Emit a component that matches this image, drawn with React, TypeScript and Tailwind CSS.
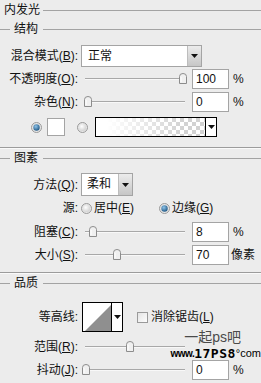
import React from "react"

const line = "bg-[#a3a3a3]"

function Radio({ on }: { on?: boolean }) {
  return (
    <svg width="11" height="11" viewBox="0 0 11 11" className="shrink-0">
      <defs>
        <radialGradient id={on ? "rOn" : "rOff"} cx="40%" cy="35%" r="70%">
          <stop offset="0%" stopColor={on ? "#8fc4ea" : "#ffffff"} />
          <stop offset="100%" stopColor={on ? "#1b5380" : "#cfcfcf"} />
        </radialGradient>
      </defs>
      <circle cx="5.5" cy="5.5" r="5" fill="#e6e6e6" stroke="#9a9a9a" />
      {on ? (
        <circle cx="5.5" cy="5.5" r="3.2" fill="url(#rOn)" />
      ) : (
        <circle cx="5.5" cy="5.5" r="3.6" fill="url(#rOff)" />
      )}
    </svg>
  )
}

function Arrow() {
  return (
    <svg width="7" height="4" viewBox="0 0 7 4">
      <path d="M0 0h7L3.5 4z" fill="#111" />
    </svg>
  )
}

function Label({ children }: { children: React.ReactNode }) {
  return <div className="w-[78px] shrink-0 text-right whitespace-nowrap">{children}</div>
}

function Slider({ at }: { at: number }) {
  // at = thumb centre, px from the slider's left edge
  return (
    <div className="relative ml-[3px] w-[108px] h-full shrink-0">
      <div className="absolute left-[4px] right-[4px] top-[9px] h-px bg-[#a8a8a8]" />
      <div className="absolute left-[4px] right-[4px] top-[10px] h-px bg-[#f8f8f8]" />
      <svg width="8" height="11" viewBox="0 0 8 11" className="absolute top-[4px]" style={{ left: at - 4 }}>
        <path d="M0.5 10.5V3.5Q0.5 0.5 4 0.5Q7.5 0.5 7.5 3.5V10.5Z" fill="#f0f0f0" stroke="#8c8c8c" />
        <path d="M2 9V4" stroke="#ffffff" />
      </svg>
    </div>
  )
}

function Field({ value }: { value: string }) {
  return (
    <div className="ml-[3px] w-[37px] h-[20px] shrink-0 bg-white border border-[#a4a4a4] pl-[3px] leading-[18px]">
      {value}
    </div>
  )
}

function Section({ title }: { title: string }) {
  return (
    <div className="flex items-center h-[18px]">
      <div className={`w-[10px] h-px ${line}`} />
      <span className="ml-[4px]">{title}</span>
      <div className={`flex-1 h-px ml-[5px] ${line}`} />
    </div>
  )
}

function Separator({ mt }: { mt: string }) {
  return (
    <div className={mt}>
      <div className="h-px bg-[#9c9c9c]" />
      <div className="h-px bg-[#fafafa]" />
    </div>
  )
}

function DropButton() {
  return (
    <div className="w-[14px] h-full flex items-center justify-center bg-gradient-to-b from-[#ececec] to-[#c6c6c6] border-l border-[#bdbdbd]">
      <Arrow />
    </div>
  )
}

export default function App() {
  return (
    <div className="relative w-[261px] h-[383px] overflow-hidden bg-[#ececec] text-[12px] text-[#111] font-['Liberation_Sans','Noto_Sans_CJK_SC',sans-serif]">
      <div className="flex items-center h-[20px]">
        <span className="ml-[4px]">内发光</span>
        <div className={`flex-1 h-px ml-[3px] ${line}`} />
      </div>
      <Section title="结构" />

      <div className="flex items-center h-[22px] mt-[7px]">
        <Label>混合模式(<u>B</u>):</Label>
        <div className="ml-[3px] w-[121px] h-[22px] flex bg-white border border-[#a4a4a4]">
          <div className="flex-1 pl-[6px] leading-[20px]">正常</div>
          <DropButton />
        </div>
      </div>

      <div className="flex items-center h-[20px] mt-[2px]">
        <Label>不透明度(<u>O</u>):</Label>
        <Slider at={102} />
        <Field value="100" />
        <span className="ml-[4px]">%</span>
      </div>

      <div className="flex items-center h-[20px] mt-[3px]">
        <Label>杂色(<u>N</u>):</Label>
        <Slider at={7} />
        <Field value="0" />
        <span className="ml-[4px]">%</span>
      </div>

      <div className="flex items-center h-[20px] mt-[5px] pl-[31px]">
        <Radio on />
        <div className="ml-[5px] w-[18px] h-[18px] bg-white border border-[#a4a4a4]" />
        <div className="ml-[12px]">
          <Radio />
        </div>
        <div className="ml-[7px] w-[122px] h-[20px] flex border border-black bg-white">
          <div className="relative flex-1 bg-[repeating-conic-gradient(#d2d2d2_0_25%,#ffffff_0_50%)] bg-[length:8px_8px]">
            <div className="absolute inset-0 bg-gradient-to-r from-white from-10% to-white/0 to-80%" />
          </div>
          <div className="w-[11px] flex items-center justify-center border-l border-black">
            <Arrow />
          </div>
        </div>
      </div>

      <Separator mt="mt-[10px]" />
      <Section title="图素" />

      <div className="flex items-center h-[23px] mt-[6px]">
        <Label>方法(<u>Q</u>):</Label>
        <div className="ml-[3px] w-[52px] h-[23px] flex bg-white border border-[#a4a4a4]">
          <div className="flex-1 pl-[5px] leading-[21px]">柔和</div>
          <DropButton />
        </div>
      </div>

      <div className="flex items-center h-[20px] mt-[2px]">
        <Label>源:</Label>
        <div className="ml-[3px]">
          <Radio />
        </div>
        <span className="ml-[2px]">居中(<u>E</u>)</span>
        <div className="ml-[25px]">
          <Radio on />
        </div>
        <span className="ml-[2px]">边缘(<u>G</u>)</span>
      </div>

      <div className="flex items-center h-[20px] mt-[4px]">
        <Label>阻塞(<u>C</u>):</Label>
        <Slider at={12} />
        <Field value="8" />
        <span className="ml-[4px]">%</span>
      </div>

      <div className="flex items-center h-[20px] mt-[3px]">
        <Label>大小(<u>S</u>):</Label>
        <Slider at={36} />
        <Field value="70" />
        <span className="ml-[2px]">像素</span>
      </div>

      <Separator mt="mt-[7px]" />
      <Section title="品质" />

      <div className="flex items-center h-[30px] mt-[10px]">
        <Label>等高线:</Label>
        <div className="ml-[4px] w-[41px] h-[30px] flex border border-black bg-white">
          <svg width="28" height="28" viewBox="0 0 28 28" className="shrink-0">
            <rect width="28" height="28" fill="#ffffff" />
            <path d="M2 28L28 2V28Z" fill="#8f8f8f" />
          </svg>
          <div className="flex-1 flex items-center justify-center border-l border-black">
            <Arrow />
          </div>
        </div>
        <div className="ml-[14px] w-[11px] h-[11px] border border-[#9a9a9a] bg-gradient-to-br from-[#e4e4e4] to-[#fdfdfd]" />
        <span className="ml-[3px]">消除锯齿(<u>L</u>)</span>
      </div>

      <div className="flex items-center h-[20px] mt-[5px]">
        <Label>范围(<u>R</u>):</Label>
        <Slider at={49} />
      </div>

      <div className="flex items-center h-[20px] mt-[3px]">
        <Label>抖动(<u>J</u>):</Label>
        <Slider at={5} />
        <Field value="0" />
        <span className="ml-[4px]">%</span>
      </div>

      <div className="absolute left-[163px] top-[330px] w-[98px] flex flex-col items-end">
        <div className="mr-[20px] text-[14px] leading-[15px] text-[#4a4a4a]">一起ps吧</div>
        <div className="mt-[3px] flex items-end leading-[11px] text-black font-bold whitespace-nowrap">
          <span className="text-[10px] tracking-[-0.5px]">www.</span>
          <span className="text-[13px] font-black tracking-[0.5px] font-['DejaVu_Sans_Mono',monospace]">17PS8</span>
          <span className="text-[11px] font-normal">°com</span>
        </div>
      </div>
    </div>
  )
}
